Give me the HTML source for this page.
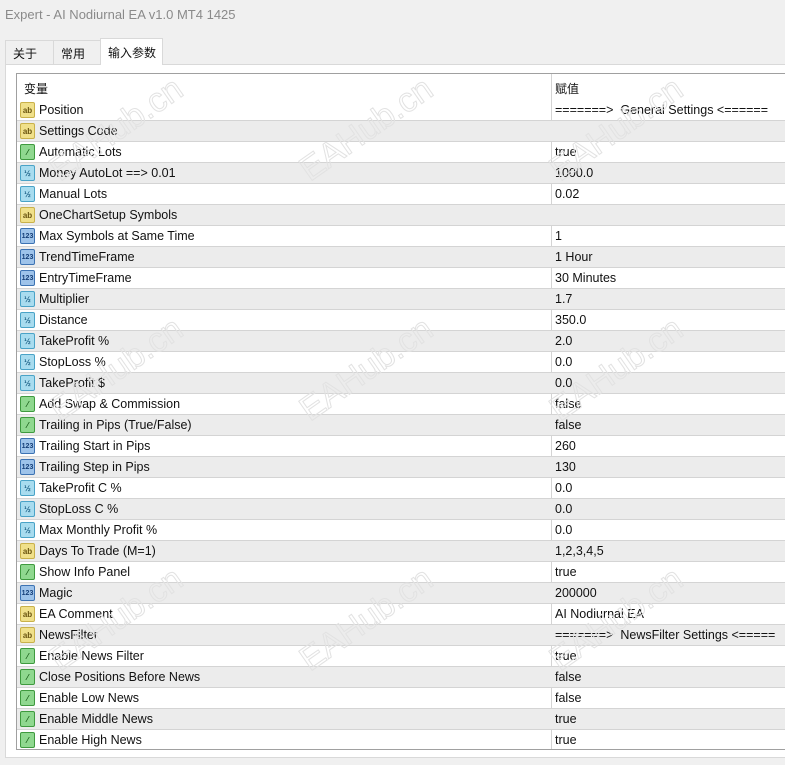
<!DOCTYPE html>
<html><head><meta charset="utf-8"><style>
*{margin:0;padding:0;box-sizing:border-box}
body{width:785px;height:765px;background:#f0f0f0;font-family:"Liberation Sans","Noto Sans CJK SC",sans-serif;font-size:12.5px;color:#111;position:relative;overflow:hidden}
.title{position:absolute;left:5px;top:7px;color:#8a8a8a;font-size:13px}
.tab{position:absolute;top:40px;height:24px;border:1px solid #d9d9d9;border-bottom:none;background:#f0f0f0;padding:4px 0 0 7px;font-size:12px}
.tab.a{top:38px;height:27px;background:#fff;padding-top:5px}
.panel{position:absolute;left:5px;top:64px;width:790px;height:694px;background:#fff;border:1px solid #d9d9d9}
.tbl{position:absolute;left:16px;top:73px;width:780px;height:677px;border:1px solid #a0a0a0;border-right:none;background:#fff;overflow:hidden}
.hd{height:26px;position:relative}
.hd span{position:absolute;top:6px;font-size:12px}
.r{height:21px;position:relative;border-bottom:1px solid #d4d4d4}
.r.g{background:#ececec}
.r .n{position:absolute;left:22px;top:3px}
.r .v{position:absolute;left:538px;top:3px}
.col{position:absolute;left:534px;top:0;width:1px;height:100%;background:#d4d4d4}
.ic{position:absolute;left:3px;top:2px;width:15px;height:16px;border-radius:2px;font-size:8px;line-height:15px;text-align:center;font-weight:bold}
.ab{background:#f0e08a;border:1px solid #c9b14a;color:#6a5510}
.bo{background:#8fd88f;border:1px solid #3f9a3f;color:#175c17}
.db{background:#a8dcef;border:1px solid #4aa3c7;color:#1a5f85}
.in{background:#9ec3ea;border:1px solid #3d73b3;color:#163f78;font-size:7px}
.wm{position:absolute;font-size:34px;color:transparent;-webkit-text-stroke:1px #e2e2e2;transform:rotate(-35deg);font-family:"Liberation Sans",sans-serif;white-space:nowrap}
</style></head><body>
<div class="title">Expert - AI Nodiurnal EA v1.0 MT4 1425</div>
<div class="panel"></div>
<div class="tab" style="left:5px;width:49px">关于</div>
<div class="tab" style="left:53px;width:48px">常用</div>
<div class="tab a" style="left:100px;width:63px">输入参数</div>
<div class="tbl">
<div class="col"></div>
<div class="hd"><span style="left:7px">变量</span><span style="left:538px">赋值</span></div>
<div class="r"><div class="ic ab">ab</div><span class="n">Position</span><span class="v">=======&gt;&nbsp; General Settings &lt;======</span></div>
<div class="r g"><div class="ic ab">ab</div><span class="n">Settings Code</span></div>
<div class="r"><div class="ic bo">⁄</div><span class="n">Automatic Lots</span><span class="v">true</span></div>
<div class="r g"><div class="ic db">½</div><span class="n">Money AutoLot ==&gt; 0.01</span><span class="v">1000.0</span></div>
<div class="r"><div class="ic db">½</div><span class="n">Manual Lots</span><span class="v">0.02</span></div>
<div class="r g"><div class="ic ab">ab</div><span class="n">OneChartSetup Symbols</span></div>
<div class="r"><div class="ic in">123</div><span class="n">Max Symbols at Same Time</span><span class="v">1</span></div>
<div class="r g"><div class="ic in">123</div><span class="n">TrendTimeFrame</span><span class="v">1 Hour</span></div>
<div class="r"><div class="ic in">123</div><span class="n">EntryTimeFrame</span><span class="v">30 Minutes</span></div>
<div class="r g"><div class="ic db">½</div><span class="n">Multiplier</span><span class="v">1.7</span></div>
<div class="r"><div class="ic db">½</div><span class="n">Distance</span><span class="v">350.0</span></div>
<div class="r g"><div class="ic db">½</div><span class="n">TakeProfit %</span><span class="v">2.0</span></div>
<div class="r"><div class="ic db">½</div><span class="n">StopLoss %</span><span class="v">0.0</span></div>
<div class="r g"><div class="ic db">½</div><span class="n">TakeProfit $</span><span class="v">0.0</span></div>
<div class="r"><div class="ic bo">⁄</div><span class="n">Add Swap &amp; Commission</span><span class="v">false</span></div>
<div class="r g"><div class="ic bo">⁄</div><span class="n">Trailing in Pips (True/False)</span><span class="v">false</span></div>
<div class="r"><div class="ic in">123</div><span class="n">Trailing Start in Pips</span><span class="v">260</span></div>
<div class="r g"><div class="ic in">123</div><span class="n">Trailing Step in Pips</span><span class="v">130</span></div>
<div class="r"><div class="ic db">½</div><span class="n">TakeProfit C %</span><span class="v">0.0</span></div>
<div class="r g"><div class="ic db">½</div><span class="n">StopLoss C %</span><span class="v">0.0</span></div>
<div class="r"><div class="ic db">½</div><span class="n">Max Monthly Profit %</span><span class="v">0.0</span></div>
<div class="r g"><div class="ic ab">ab</div><span class="n">Days To Trade (M=1)</span><span class="v">1,2,3,4,5</span></div>
<div class="r"><div class="ic bo">⁄</div><span class="n">Show Info Panel</span><span class="v">true</span></div>
<div class="r g"><div class="ic in">123</div><span class="n">Magic</span><span class="v">200000</span></div>
<div class="r"><div class="ic ab">ab</div><span class="n">EA Comment</span><span class="v">AI Nodiurnal EA</span></div>
<div class="r g"><div class="ic ab">ab</div><span class="n">NewsFilter</span><span class="v">=======&gt;&nbsp; NewsFilter Settings &lt;=====</span></div>
<div class="r"><div class="ic bo">⁄</div><span class="n">Enable News Filter</span><span class="v">true</span></div>
<div class="r g"><div class="ic bo">⁄</div><span class="n">Close Positions Before News</span><span class="v">false</span></div>
<div class="r"><div class="ic bo">⁄</div><span class="n">Enable Low News</span><span class="v">false</span></div>
<div class="r g"><div class="ic bo">⁄</div><span class="n">Enable Middle News</span><span class="v">true</span></div>
<div class="r" style="border-bottom:none"><div class="ic bo">⁄</div><span class="n">Enable High News</span><span class="v">true</span></div>
</div>
<div class="wm" style="left:40px;top:110px">EAHub.cn</div>
<div class="wm" style="left:290px;top:110px">EAHub.cn</div>
<div class="wm" style="left:540px;top:110px">EAHub.cn</div>
<div class="wm" style="left:40px;top:350px">EAHub.cn</div>
<div class="wm" style="left:290px;top:350px">EAHub.cn</div>
<div class="wm" style="left:540px;top:350px">EAHub.cn</div>
<div class="wm" style="left:40px;top:600px">EAHub.cn</div>
<div class="wm" style="left:290px;top:600px">EAHub.cn</div>
<div class="wm" style="left:540px;top:600px">EAHub.cn</div>
</body></html>
